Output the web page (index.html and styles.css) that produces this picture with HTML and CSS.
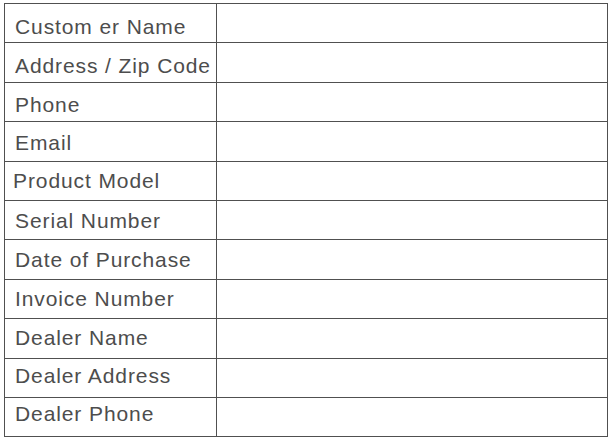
FILE: index.html
```html
<!DOCTYPE html>
<html>
<head>
<meta charset="utf-8">
<link rel="stylesheet" href="styles.css">
</head>
<body>
<table class="form">
  <tr><td class="label">Custom er Name</td><td class="field"></td></tr>
  <tr><td class="label">Address / Zip Code</td><td class="field"></td></tr>
  <tr><td class="label">Phone</td><td class="field"></td></tr>
  <tr><td class="label">Email</td><td class="field"></td></tr>
  <tr><td class="label label-shift">Product Model</td><td class="field"></td></tr>
  <tr><td class="label">Serial Number</td><td class="field"></td></tr>
  <tr><td class="label">Date of Purchase</td><td class="field"></td></tr>
  <tr><td class="label">Invoice Number</td><td class="field"></td></tr>
  <tr><td class="label">Dealer Name</td><td class="field"></td></tr>
  <tr><td class="label">Dealer Address</td><td class="field"></td></tr>
  <tr><td class="label">Dealer Phone</td><td class="field"></td></tr>
</table>
</body>
</html>
```
FILE: styles.css
```css
html, body {
  margin: 0;
  padding: 0;
  background: #ffffff;
}
body {
  padding: 3px 0 0 4px;
  font-family: "Liberation Sans", Arial, sans-serif;
}
.form {
  border-collapse: collapse;
  width: 604px;
  table-layout: fixed;
}
.form td {
  border: 1.3px solid #505050;
  height: 39.4px;
  padding: 0;
  box-sizing: border-box;
}
.form .label {
  width: 212px;
  color: #4d4d4d;
  font-size: 21px;
  line-height: 24px;
  letter-spacing: 0.9px;
  padding: 10.8px 0 0 10px;
  white-space: nowrap;
  vertical-align: top;
}
.form .label-shift {
  padding-left: 8px;
}
.form tr:nth-child(3) .label { padding-top: 10.5px; }
.form tr:nth-child(4) .label { padding-top: 9.1px; }
.form tr:nth-child(5) .label { padding-top: 7.8px; }
.form tr:nth-child(6) .label { padding-top: 7.8px; }
.form tr:nth-child(7) .label { padding-top: 7.8px; }
.form tr:nth-child(8) .label { padding-top: 6.8px; }
.form tr:nth-child(9) .label { padding-top: 7.1px; }
.form tr:nth-child(10) .label { padding-top: 5.8px; }
.form tr:nth-child(11) .label { padding-top: 3.8px; }
```
